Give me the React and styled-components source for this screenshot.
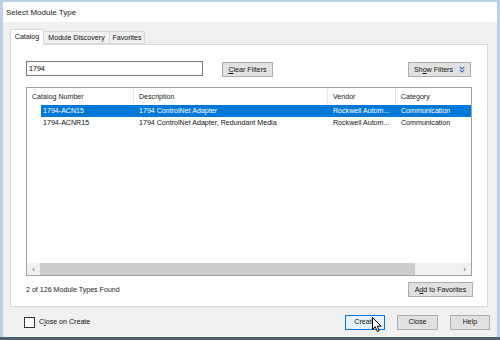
import React from "react";
import styled, { createGlobalStyle } from "styled-components";

const Global = createGlobalStyle`
  html, body { margin: 0; padding: 0; background: #ffffff; }
  body { font-family: "Liberation Sans", Arial, sans-serif; }
  * { box-sizing: border-box; }
`;

const Page = styled.div`
  position: relative;
  width: 500px;
  height: 340px;
  display: flex;
  flex-direction: column;
  overflow: hidden;
  font-family: "Liberation Sans", Arial, sans-serif;
  font-size: 7.1px;
  color: #000;
`;

const Frame = styled.div`
  flex: 1;
  display: flex;
  flex-direction: column;
  border-left: 3px solid #b9d1ea;
  border-right: 3px solid #b9d1ea;
  border-top: 2px solid #b9d1ea;
  min-height: 0;
`;

const TitleBar = styled.div`
  height: 20px;
  background: #ffffff;
  display: flex;
  align-items: center;
  padding-left: 3px;
  font-size: 8px;
  color: #1a1a1a;
`;

const Body = styled.div`
  flex: 1;
  background: #f0f0f0;
  display: flex;
  flex-direction: column;
  padding: 7px 9px 0 7px;
  min-height: 0;
`;

const Tabs = styled.div`
  display: flex;
  align-items: flex-end;
  height: 15px;
  position: relative;
  z-index: 1;
`;

const Tab = styled.div`
  height: ${(p) => (p.$active ? "16px" : "13px")};
  margin-bottom: ${(p) => (p.$active ? "-1px" : "0")};
  width: ${(p) => p.$w}px;
  display: flex;
  align-items: center;
  justify-content: center;
  background: ${(p) => (p.$active ? "#ffffff" : "#f0f0f0")};
  border: 1px solid #d9d9d9;
  border-bottom: ${(p) => (p.$active ? "none" : "1px solid #d9d9d9")};
  margin-right: -1px;
  padding-bottom: ${(p) => (p.$active ? "1px" : "0")};
  color: #111;
`;

const Panel = styled.div`
  height: 263px;
  background: #ffffff;
  border: 1px solid #d9d9d9;
  display: flex;
  flex-direction: column;
  padding: 16px 16px 9px 15px;
`;

const SearchRow = styled.div`
  display: flex;
  align-items: flex-start;
  height: 16px;
`;

const Input = styled.div`
  width: 177px;
  height: 15px;
  border: 1px solid #7a7a7a;
  display: flex;
  align-items: center;
  padding-left: 2px;
  background: #fff;
`;

const Button = styled.div`
  height: 15px;
  width: ${(p) => p.$w}px;
  margin-left: ${(p) => p.$ml || "0"};
  margin-top: ${(p) => p.$mt || "0"};
  background: ${(p) => (p.$hot ? "#e5f1fb" : "#e1e1e1")};
  border: 1px solid ${(p) => (p.$hot ? "#0078d7" : "#adadad")};
  display: flex;
  align-items: center;
  justify-content: center;
  gap: 6px;
  color: #111;
  flex-shrink: 0;
`;

const U = styled.span`
  text-decoration: underline;
  text-underline-offset: 1px;
`;

const Spacer = styled.div`
  flex: 1;
`;

const List = styled.div`
  margin-top: 10px;
  height: 189px;
  border: 1px solid #a0a0a0;
  display: flex;
  flex-direction: column;
  margin-right: -1px;
`;

const Header = styled.div`
  display: flex;
  height: 17px;
  align-items: stretch;
  color: #222;
`;

const HeadCell = styled.div`
  width: ${(p) => p.$w}px;
  padding-left: 5px;
  display: flex;
  align-items: center;
  border-right: ${(p) => (p.$last ? "none" : "1px solid #e5e5e5")};
`;

const Rows = styled.div`
  flex: 1;
  display: flex;
  flex-direction: column;
`;

const Row = styled.div`
  display: flex;
  height: 12px;
  align-items: center;
  padding-left: 14px;
`;

const RowInner = styled.div`
  display: flex;
  height: 12px;
  align-items: center;
  flex: 1;
  background: ${(p) => (p.$sel ? "#0078d7" : "transparent")};
  color: ${(p) => (p.$sel ? "#ffffff" : "#111")};
`;

const Cell = styled.div`
  width: ${(p) => p.$w}px;
  padding-left: ${(p) => p.$pl || 5}px;
  white-space: nowrap;
  overflow: hidden;
`;

const HScroll = styled.div`
  height: 12px;
  display: flex;
  background: #f0f0f0;
`;

const Arrow = styled.div`
  width: 13px;
  display: flex;
  align-items: center;
  justify-content: center;
  color: #606060;
  font-size: 8px;
`;

const Thumb = styled.div`
  width: 375px;
  background: #cdcdcd;
`;

const StatusRow = styled.div`
  display: flex;
  align-items: center;
  margin-top: 6px;
  height: 15px;
  margin-right: -2px;
  color: #222;
`;

const Footer = styled.div`
  flex: 1;
  display: flex;
  align-items: center;
  padding-left: 14px;
  margin-right: -2px;
`;

const Check = styled.div`
  width: 11px;
  height: 11px;
  border: 1px solid #333;
  background: #fff;
  margin-right: 4px;
`;

const Label = styled.div`
  color: #111;
`;

const ButtonGroup = styled.div`
  margin-left: auto;
  display: flex;
  gap: 12px;
`;

const Taskbar = styled.div`
  height: 3px;
  background: #51606f;
`;

const Cursor = styled.svg`
  position: absolute;
  left: 372px;
  top: 317px;
`;

const ChevronsDown = () => (
  <svg width="6" height="7" viewBox="0 0 6 7">
    <path d="M0.7 0.8 L3 2.9 L5.3 0.8" fill="none" stroke="#3d6cc0" strokeWidth="1.1" />
    <path d="M0.7 3.8 L3 5.9 L5.3 3.8" fill="none" stroke="#3d6cc0" strokeWidth="1.1" />
  </svg>
);

const cols = [107, 194, 68, 74];

const rows = [
  { sel: true, c: ["1794-ACN15", "1794 ControlNet Adapter", "Rockwell Autom...", "Communication"] },
  { sel: false, c: ["1794-ACNR15", "1794 ControlNet Adapter, Redundant Media", "Rockwell Autom...", "Communication"] },
];

export default function App() {
  return (
    <>
      <Global />
      <Page>
        <Frame>
          <TitleBar>Select Module Type</TitleBar>
          <Body>
            <Tabs>
              <Tab $active $w={34}>Catalog</Tab>
              <Tab $w={67}>Module Discovery</Tab>
              <Tab $w={36}>Favorites</Tab>
            </Tabs>
            <Panel>
              <SearchRow>
                <Input>1794</Input>
                <Button $w={51} $ml="19px" $mt="1px">
                  <span><U>C</U>lear Filters</span>
                </Button>
                <Spacer />
                <Button $w={63} $mt="1px">
                  <span>Sh<U>o</U>w Filters</span>
                  <ChevronsDown />
                </Button>
              </SearchRow>
              <List>
                <Header>
                  <HeadCell $w={cols[0]}>Catalog Number</HeadCell>
                  <HeadCell $w={cols[1]}>Description</HeadCell>
                  <HeadCell $w={cols[2]}>Vendor</HeadCell>
                  <HeadCell $w={cols[3]} $last>Category</HeadCell>
                </Header>
                <Rows>
                  {rows.map((r, i) => (
                    <Row key={i}>
                      <RowInner $sel={r.sel}>
                        <Cell $w={cols[0] - 14} $pl={2}>{r.c[0]}</Cell>
                        <Cell $w={cols[1]}>{r.c[1]}</Cell>
                        <Cell $w={cols[2]}>{r.c[2]}</Cell>
                        <Cell $w={cols[3]}>{r.c[3]}</Cell>
                      </RowInner>
                    </Row>
                  ))}
                </Rows>
                <HScroll>
                  <Arrow>‹</Arrow>
                  <Thumb />
                  <Spacer />
                  <Arrow>›</Arrow>
                </HScroll>
              </List>
              <StatusRow>
                <span>2 of 126 Module Types Found</span>
                <Spacer />
                <Button $w={65}>
                  <span>A<U>d</U>d to Favorites</span>
                </Button>
              </StatusRow>
            </Panel>
            <Footer>
              <Check />
              <Label>C<U>l</U>ose on Create</Label>
              <ButtonGroup>
                <Button $w={40} $hot>Create</Button>
                <Button $w={41}>Close</Button>
                <Button $w={40}>Help</Button>
              </ButtonGroup>
            </Footer>
          </Body>
        </Frame>
        <Taskbar />
        <Cursor width="11" height="17" viewBox="0 0 11 17">
          <path d="M0.5 0.5 L0.5 12.5 L3.3 9.8 L5.3 14.5 L7.2 13.7 L5.3 9.2 L9.2 9.2 Z" fill="#ffffff" stroke="#000000" strokeWidth="1" strokeLinejoin="miter" />
        </Cursor>
      </Page>
    </>
  );
}
